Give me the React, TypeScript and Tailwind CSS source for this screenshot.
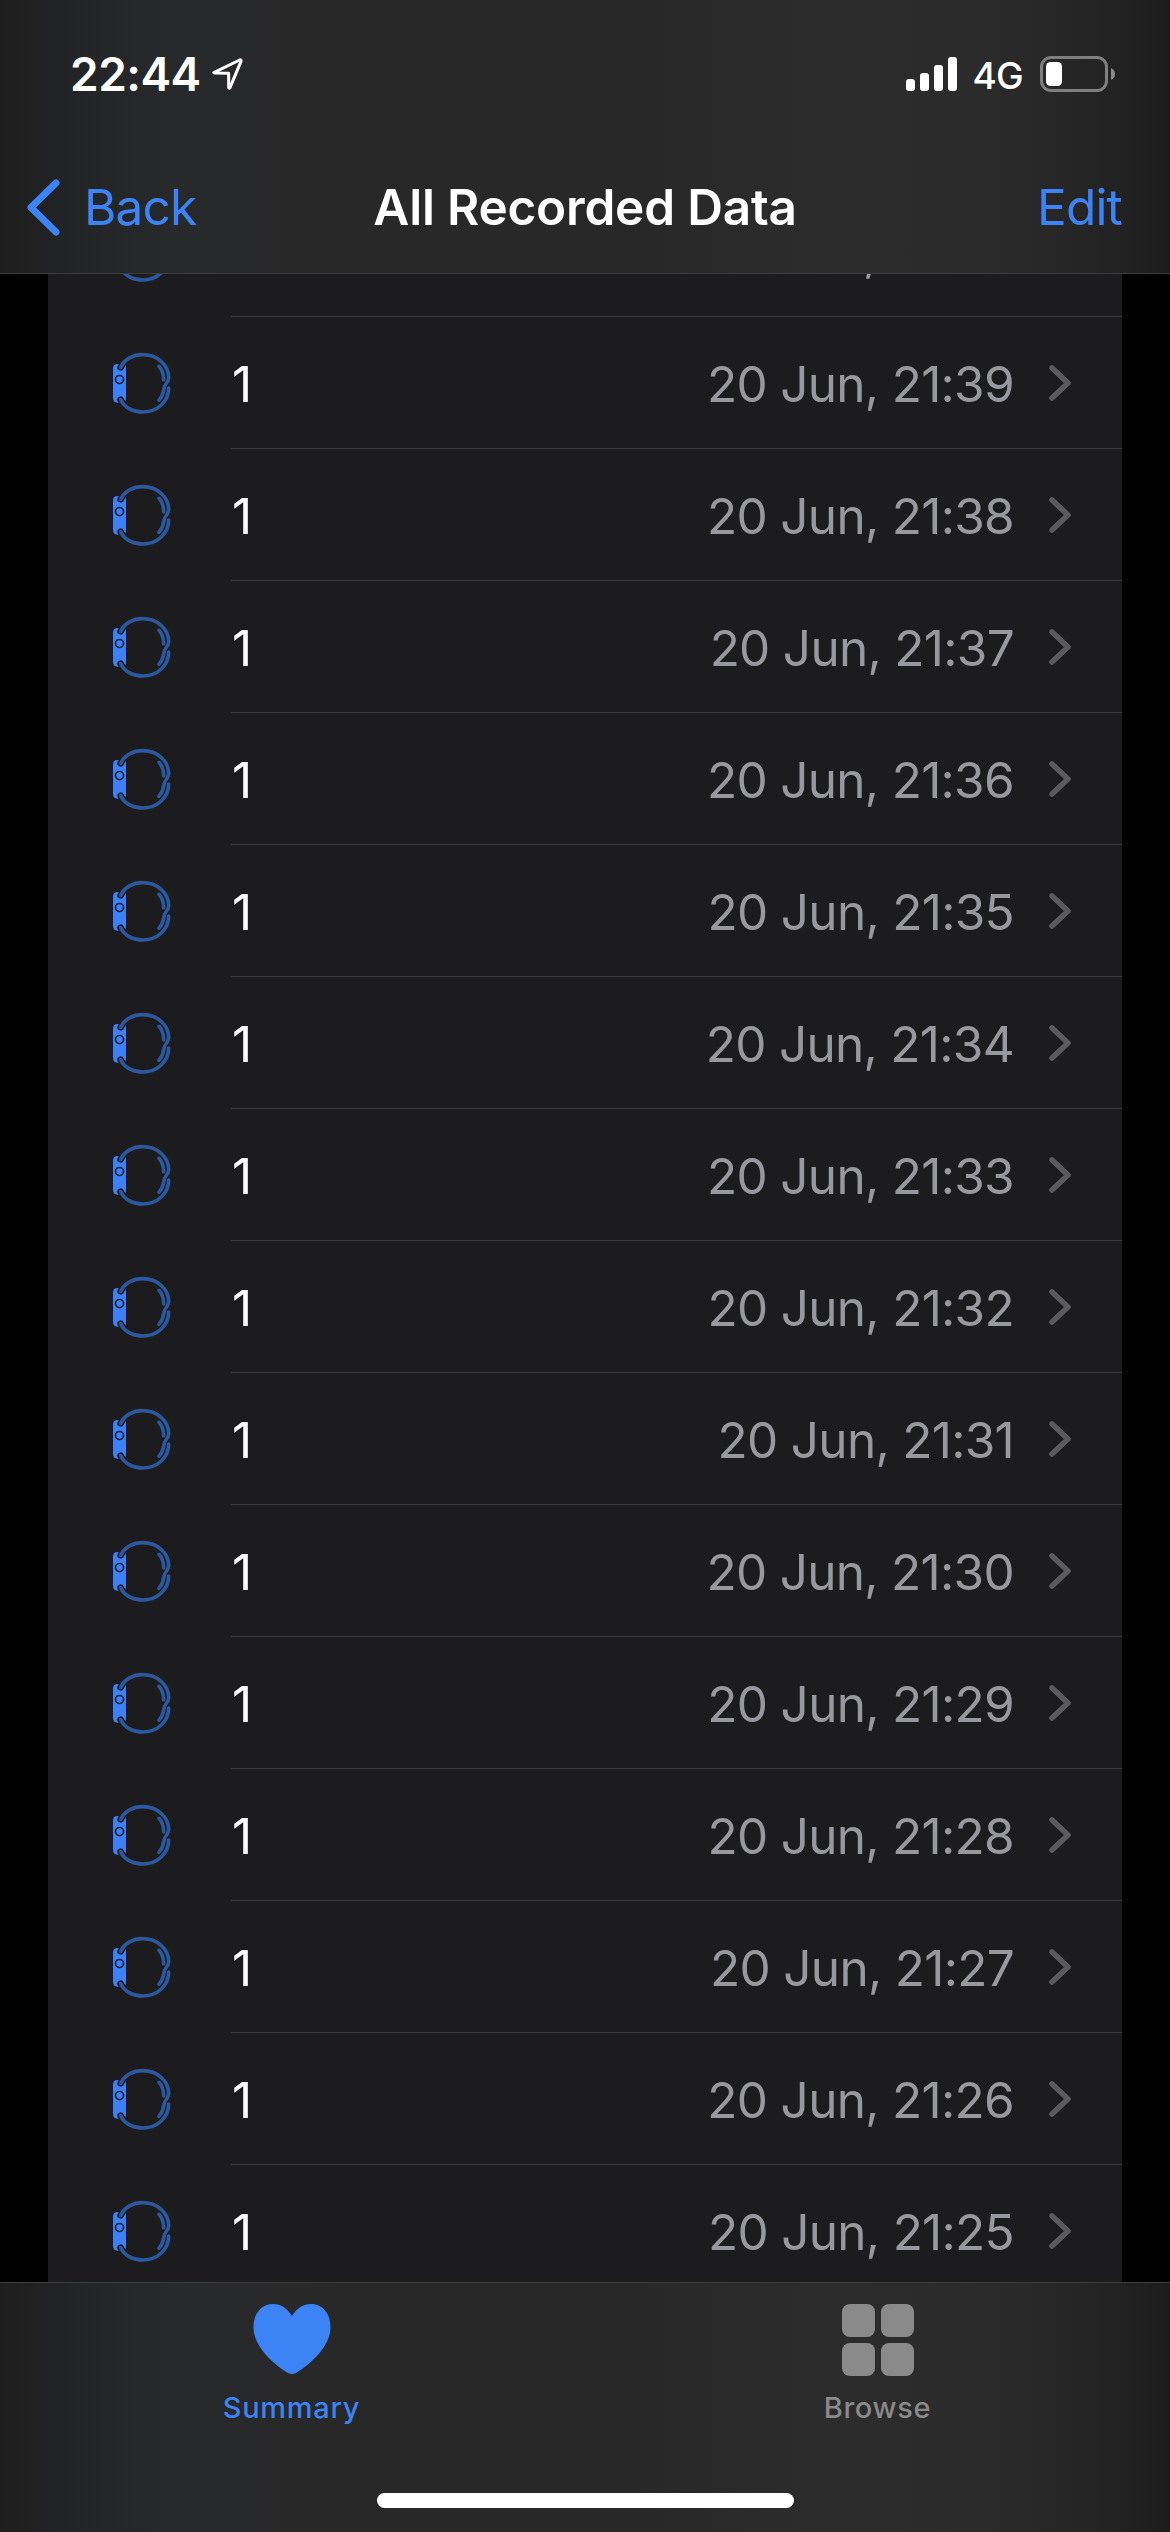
const entries = [40, 39, 38, 37, 36, 35, 34, 33, 32, 31, 30, 29, 28, 27, 26, 25].map((minute) => ({
  count: 1,
  date: `20 Jun, 21:${minute}`,
}))

function LocationIcon() {
  return (
    <svg className="ml-[11px] h-[34px] w-[32px]" viewBox="0 0 96 102" fill="none">
      <path
        d="M7 46 L83 9 Q88 7 87 13 L54 92 Q51 97 50 91 L50 49 L9 48 Q3 47 7 46 Z"
        stroke="white"
        strokeWidth="9"
        strokeLinejoin="round"
      />
    </svg>
  )
}

function SignalIcon() {
  return (
    <div className="flex h-[34px] items-end gap-[5px]">
      <div className="h-[12px] w-[9px] rounded-[3px] bg-white" />
      <div className="h-[18px] w-[9px] rounded-[3px] bg-white" />
      <div className="h-[26px] w-[9px] rounded-[3px] bg-white" />
      <div className="h-[34px] w-[9px] rounded-[3px] bg-white" />
    </div>
  )
}

function BatteryIcon() {
  return (
    <svg className="h-[36px] w-[76px]" viewBox="0 0 76 36" fill="none">
      <rect x="1.5" y="1.5" width="65" height="33" rx="9.5" stroke="#7f7f7f" strokeWidth="3" />
      <rect x="6" y="6" width="16" height="24" rx="4.5" fill="white" />
      <path d="M71 12 Q75 14 75 18 Q75 22 71 24 Z" fill="#8a8a8a" />
    </svg>
  )
}

function WatchIcon() {
  return (
    <svg className="h-[67px] w-[60px]" viewBox="66 57 180 201" fill="none" strokeLinecap="round">
      <path
        d="M78 102 H99 Q108 103 108 112 V207 Q108 216 99 218 H84 Q69 218 69 203 V116 Q69 103 80 102 Z"
        fill="#3e80f7"
      />
      <circle cx="88.500" cy="148.500" r="12" stroke="#1b2438" strokeWidth="5" />
      <path d="M92 112 C94 108 96 104 99 100 M92 209 C94 213 96 216 99 220" stroke="#1c1c1e" strokeWidth="20" />
      <g stroke="#2c589f" strokeWidth="11">
        <path d="M92 112 C103 87 130 74 158 74 C203 74 236 106 236 142 C236 160 223 160 221 179 C219 194 216 201 207 211" />
        <path d="M92 209 C103 233 130 246 158 246 C203 246 236 214 236 174" />
        <path d="M207 109 C216 119 221 132 221 149" />
      </g>
      <path d="M229 173 Q231 165 239 160" stroke="#1c1c1e" strokeWidth="3" />
    </svg>
  )
}

function Row({ count, date }: { count: number; date: string }) {
  return (
    <div className="flex h-[132px] shrink-0">
      <div className="flex w-[183px] items-center pb-px pl-[64px]">
        <WatchIcon />
      </div>
      <div className="flex flex-1 items-center border-b border-[#3b3b3e] pr-[50px] pl-px text-[49.5px]">
        <span className="pt-[3px] text-white">{count}</span>
        <span className="ml-auto pt-[3px] tracking-[-0.7px] text-[#98989f]">{date}</span>
        <svg className="ml-[34px] h-[38px] w-[24px]" viewBox="0 0 24 38" fill="none">
          <path d="M4 4 L20 19 L4 34" stroke="#5b5b5f" strokeWidth="5.500" strokeLinecap="round" strokeLinejoin="round" />
        </svg>
      </div>
    </div>
  )
}

function Header() {
  return (
    <header className="h-[274px] shrink-0 border-b border-[#3d3d3e] bg-[linear-gradient(90deg,#1e1e1e_0%,#242527_7%,#28292b_16%,#282828_30%,#282828_55%,#2c2c2d_70%,#2b2b2b_84%,#242424_94%,#1c1c1c_100%)]">
      <div className="flex h-[148px] items-center pr-[54px] pl-[70px]">
        <span className="text-[46px] font-semibold tracking-[-0.5px] text-white">22:44</span>
        <LocationIcon />
        <div className="ml-auto flex items-center">
          <SignalIcon />
          <span className="mr-[17px] ml-[15px] pt-[3px] text-[37px] font-medium tracking-[-0.7px] text-white">4G</span>
          <BatteryIcon />
        </div>
      </div>
      <nav className="grid h-[118px] grid-cols-[1fr_auto_1fr] items-center px-[26px] text-[49.5px] text-[#3c83f6]">
        <div className="flex items-center">
          <svg className="h-[58px] w-[36px]" viewBox="0 0 36 58" fill="none">
            <path d="M30 5 L5 29.500 L30 54" stroke="currentColor" strokeWidth="7" strokeLinecap="round" strokeLinejoin="round" />
          </svg>
          <span className="ml-[22px] tracking-[-0.8px]">Back</span>
        </div>
        <h1 className="font-semibold tracking-[-0.2px] text-white">All Recorded Data</h1>
        <span className="pr-[22px] text-right tracking-[-0.8px]">Edit</span>
      </nav>
    </header>
  )
}

function TabBar() {
  return (
    <footer className="flex h-[250px] shrink-0 flex-col items-center border-t border-[#3d3d3e] bg-[linear-gradient(90deg,#1e1e1e_0%,#242527_7%,#28292b_16%,#282828_30%,#282828_55%,#2c2c2d_70%,#2b2b2b_84%,#242424_94%,#1c1c1c_100%)]">
      <div className="grid h-[210px] w-full grid-cols-2 text-[29px] leading-[36px] font-medium tracking-[0.7px]">
        <div className="flex flex-col items-center pt-[21px] pr-[2px] text-[#3c83f6]">
          <svg className="h-[72px] w-[78px]" viewBox="0 0 78 72" fill="currentColor">
            <path d="M39 12 C44 4 50 0 58 0 C70 0 77.500 10 77.500 23 C77.500 42 59 59 43 69 Q39 71 35 69 C19 59 .5 42 .5 23 C.5 10 8 0 20 0 C28 0 34 4 39 12 Z" />
          </svg>
          <span className="mt-[14px]">Summary</span>
        </div>
        <div className="flex flex-col items-center pt-[21px] text-[#8a8a8a]">
          <div className="grid grid-cols-2 gap-[6px]">
            <div className="size-[33px] rounded-[8px] bg-current" />
            <div className="size-[33px] rounded-[8px] bg-current" />
            <div className="size-[33px] rounded-[8px] bg-current" />
            <div className="size-[33px] rounded-[8px] bg-current" />
          </div>
          <span className="mt-[14px]">Browse</span>
        </div>
      </div>
      <div className="h-[15px] w-[417px] rounded-full bg-white" />
    </footer>
  )
}

export default function App() {
  return (
    <div className="flex h-[2532px] w-[1170px] flex-col overflow-hidden bg-black font-[Inter,sans-serif]">
      <Header />
      <main className="min-h-0 flex-1 overflow-hidden px-[48px]">
        <div className="-mt-[89px] flex flex-col bg-[#1c1c1e]">
          {entries.map((entry) => (
            <Row key={entry.date} count={entry.count} date={entry.date} />
          ))}
        </div>
      </main>
      <TabBar />
    </div>
  )
}
